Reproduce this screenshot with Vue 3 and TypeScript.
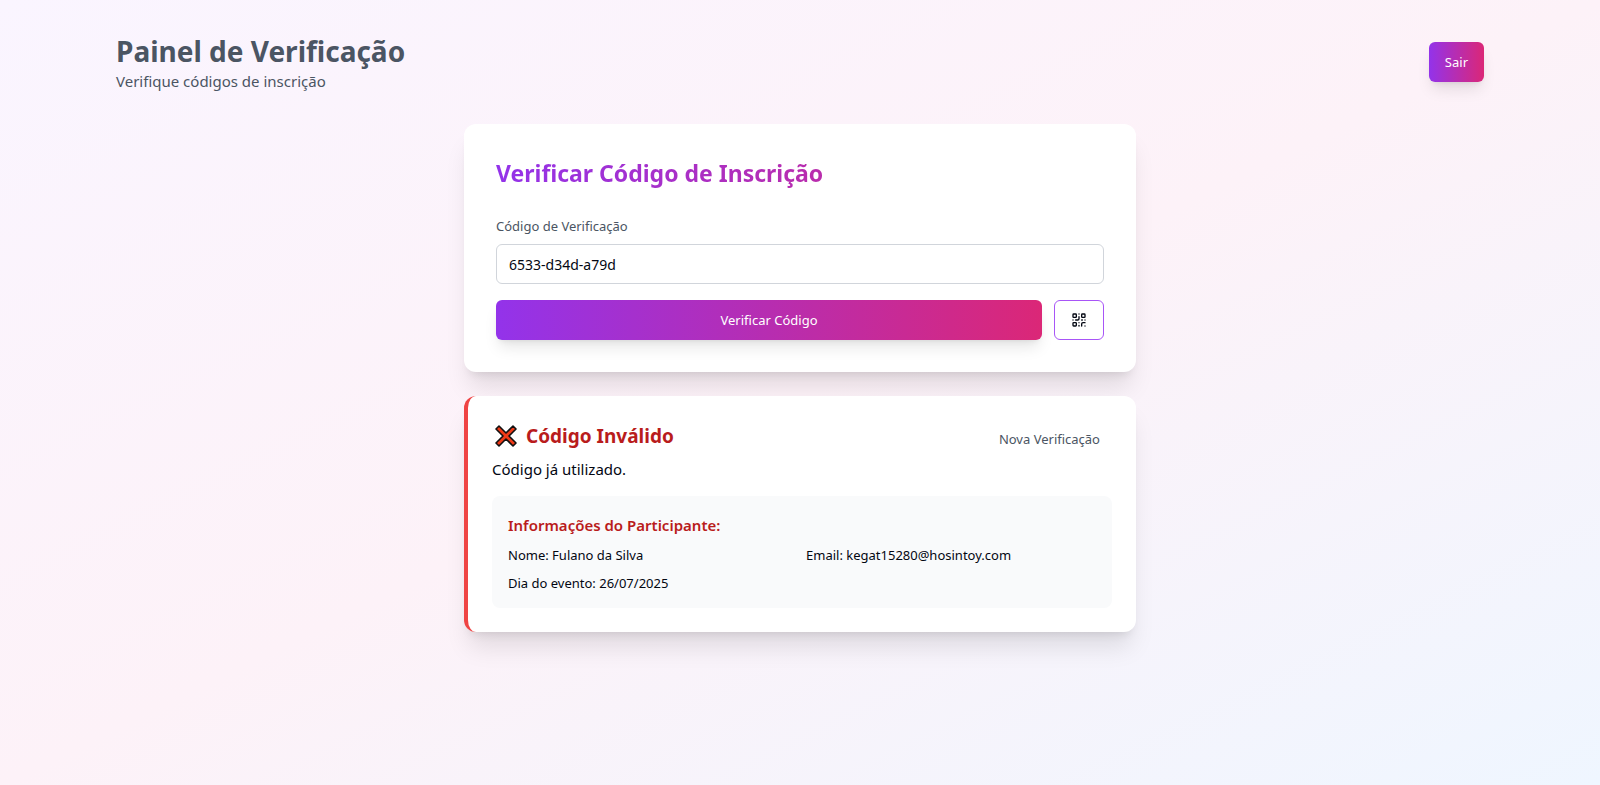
<script setup lang="ts">
import { ref } from 'vue'

interface Detail {
  label: string
  value: string
}

const code = ref('6533-d34d-a79d')
const showResult = ref(true)

const details: Detail[] = [
  { label: 'Nome', value: 'Fulano da Silva' },
  { label: 'Email', value: 'kegat15280@hosintoy.com' },
  { label: 'Dia do evento', value: '26/07/2025' },
]

function verify(): void {
  showResult.value = code.value.trim().length > 0
}

function reset(): void {
  code.value = ''
  showResult.value = false
}
</script>

<template>
  <div class="page">
    <div class="container">
      <header class="header">
        <div>
          <h1 class="title">Painel de Verificação</h1>
          <p class="subtitle">Verifique códigos de inscrição</p>
        </div>
        <button type="button" class="btn btn-primary">Sair</button>
      </header>

      <main class="content">
        <section class="card form-card">
          <h2 class="card-title">Verificar Código de Inscrição</h2>
          <form @submit.prevent="verify">
            <label class="label" for="code">Código de Verificação</label>
            <input id="code" v-model="code" class="input" type="text" autocomplete="off" spellcheck="false" />
            <div class="actions">
              <button type="submit" class="btn btn-primary btn-grow">Verificar Código</button>
              <button type="button" class="btn btn-outline" aria-label="Ler QR code">
                <svg
                  width="16"
                  height="16"
                  viewBox="0 0 24 24"
                  fill="none"
                  stroke="currentColor"
                  stroke-width="2"
                  stroke-linecap="round"
                  stroke-linejoin="round"
                  aria-hidden="true"
                >
                  <rect width="5" height="5" x="3" y="3" rx="1" />
                  <rect width="5" height="5" x="16" y="3" rx="1" />
                  <rect width="5" height="5" x="3" y="16" rx="1" />
                  <path d="M21 16h-3a2 2 0 0 0-2 2v3" />
                  <path d="M21 21v.01" />
                  <path d="M12 7v3a2 2 0 0 1-2 2H7" />
                  <path d="M3 12h.01" />
                  <path d="M12 3h.01" />
                  <path d="M12 16v.01" />
                  <path d="M16 12h1" />
                  <path d="M21 12v.01" />
                  <path d="M12 21v-1" />
                </svg>
              </button>
            </div>
          </form>
        </section>

        <section v-if="showResult" class="card result-card">
          <div class="result-header">
            <h3 class="result-title">
              <svg class="cross" width="28" height="28" viewBox="0 0 28 28" aria-hidden="true">
                <path
                  d="M7 4 L14 11 L21 4 L24 7 L17 14 L24 21 L21 24 L14 17 L7 24 L4 21 L11 14 L4 7 Z"
                  fill="#f03a17"
                  stroke="#111"
                  stroke-width="1.6"
                  stroke-linejoin="round"
                />
              </svg>
              Código Inválido
            </h3>
            <button type="button" class="btn btn-ghost" @click="reset">Nova Verificação</button>
          </div>
          <p class="message">Código já utilizado.</p>
          <div class="info">
            <h4 class="info-title">Informações do Participante:</h4>
            <div class="info-grid">
              <p v-for="item in details" :key="item.label">{{ item.label }}: {{ item.value }}</p>
            </div>
          </div>
        </section>
      </main>
    </div>
  </div>
</template>

<style>
body {
  margin: 0;
}
</style>

<style scoped>
.page,
.page * {
  box-sizing: border-box;
}

.page {
  min-height: 100vh;
  background: linear-gradient(to bottom right, #faf5ff, #fdf2f8, #eff6ff);
  font-family: 'Segoe UI', 'Noto Sans', 'Open Sans', sans-serif;
  font-size: 15px;
  line-height: 22px;
  color: #030712;
}

h1,
h2,
h3,
h4,
p {
  margin: 0;
}

.container {
  max-width: 1400px;
  margin: 0 auto;
  padding: 32px 16px;
}

.header {
  display: flex;
  align-items: center;
  justify-content: space-between;
  margin-bottom: 32px;
}

.title {
  font-size: 28px;
  line-height: 38px;
  font-weight: 700;
  color: #4b5563;
}

.subtitle {
  color: #4b5563;
}

.content {
  display: flex;
  flex-direction: column;
  gap: 24px;
  max-width: 672px;
  margin: 0 auto;
}

.card {
  background: #fff;
  border-radius: 12px;
  box-shadow: 0 20px 25px -5px rgba(0, 0, 0, 0.1), 0 8px 10px -6px rgba(0, 0, 0, 0.1);
}

.form-card {
  padding: 32px;
}

.card-title {
  margin-bottom: 26px;
  font-size: 23px;
  line-height: 34px;
  font-weight: 700;
  color: transparent;
  background: linear-gradient(to right, #9333ea, #db2777);
  background-clip: text;
  -webkit-background-clip: text;
}

.label {
  display: block;
  margin-bottom: 8px;
  font-size: 13px;
  line-height: 20px;
  color: #4b5563;
}

.input {
  display: block;
  width: 100%;
  height: 40px;
  padding: 0 12px;
  border: 1px solid #d1d5db;
  border-radius: 6px;
  background: #fff;
  font: inherit;
  font-size: 14px;
  color: inherit;
}

.actions {
  display: flex;
  gap: 12px;
  margin-top: 16px;
}

.btn {
  display: inline-flex;
  align-items: center;
  justify-content: center;
  height: 40px;
  padding: 0 16px;
  border: 0;
  border-radius: 6px;
  background: transparent;
  font: inherit;
  font-size: 13px;
  line-height: 22px;
  color: inherit;
  cursor: pointer;
}

.btn-primary {
  background: linear-gradient(to right, #9333ea, #db2777);
  color: #fff;
  box-shadow: 0 10px 15px -3px rgba(0, 0, 0, 0.1), 0 4px 6px -4px rgba(0, 0, 0, 0.1);
}

.btn-grow {
  flex: 1;
}

.btn-outline {
  border: 1px solid #a855f7;
  background: #fff;
}

.btn-ghost {
  height: 38px;
  padding: 0 12px;
  color: #4b5563;
}

.result-card {
  padding: 24px;
  border-left: 4px solid #ef4444;
}

.result-header {
  display: flex;
  align-items: flex-start;
  justify-content: space-between;
}

.result-title {
  display: flex;
  align-items: center;
  gap: 6px;
  font-size: 19px;
  line-height: 32px;
  font-weight: 700;
  color: #b91c1c;
}

.cross {
  flex: none;
}

.info {
  margin-top: 16px;
  padding: 16px 16px 14px;
  border-radius: 8px;
  background: #f9fafb;
}

.info-title {
  margin-bottom: 6px;
  font-size: 15px;
  line-height: 26px;
  font-weight: 600;
  color: #b91c1c;
}

.info-grid {
  display: grid;
  grid-template-columns: 1fr 1fr;
  gap: 6px 8px;
  font-size: 13px;
  line-height: 22px;
}
</style>
